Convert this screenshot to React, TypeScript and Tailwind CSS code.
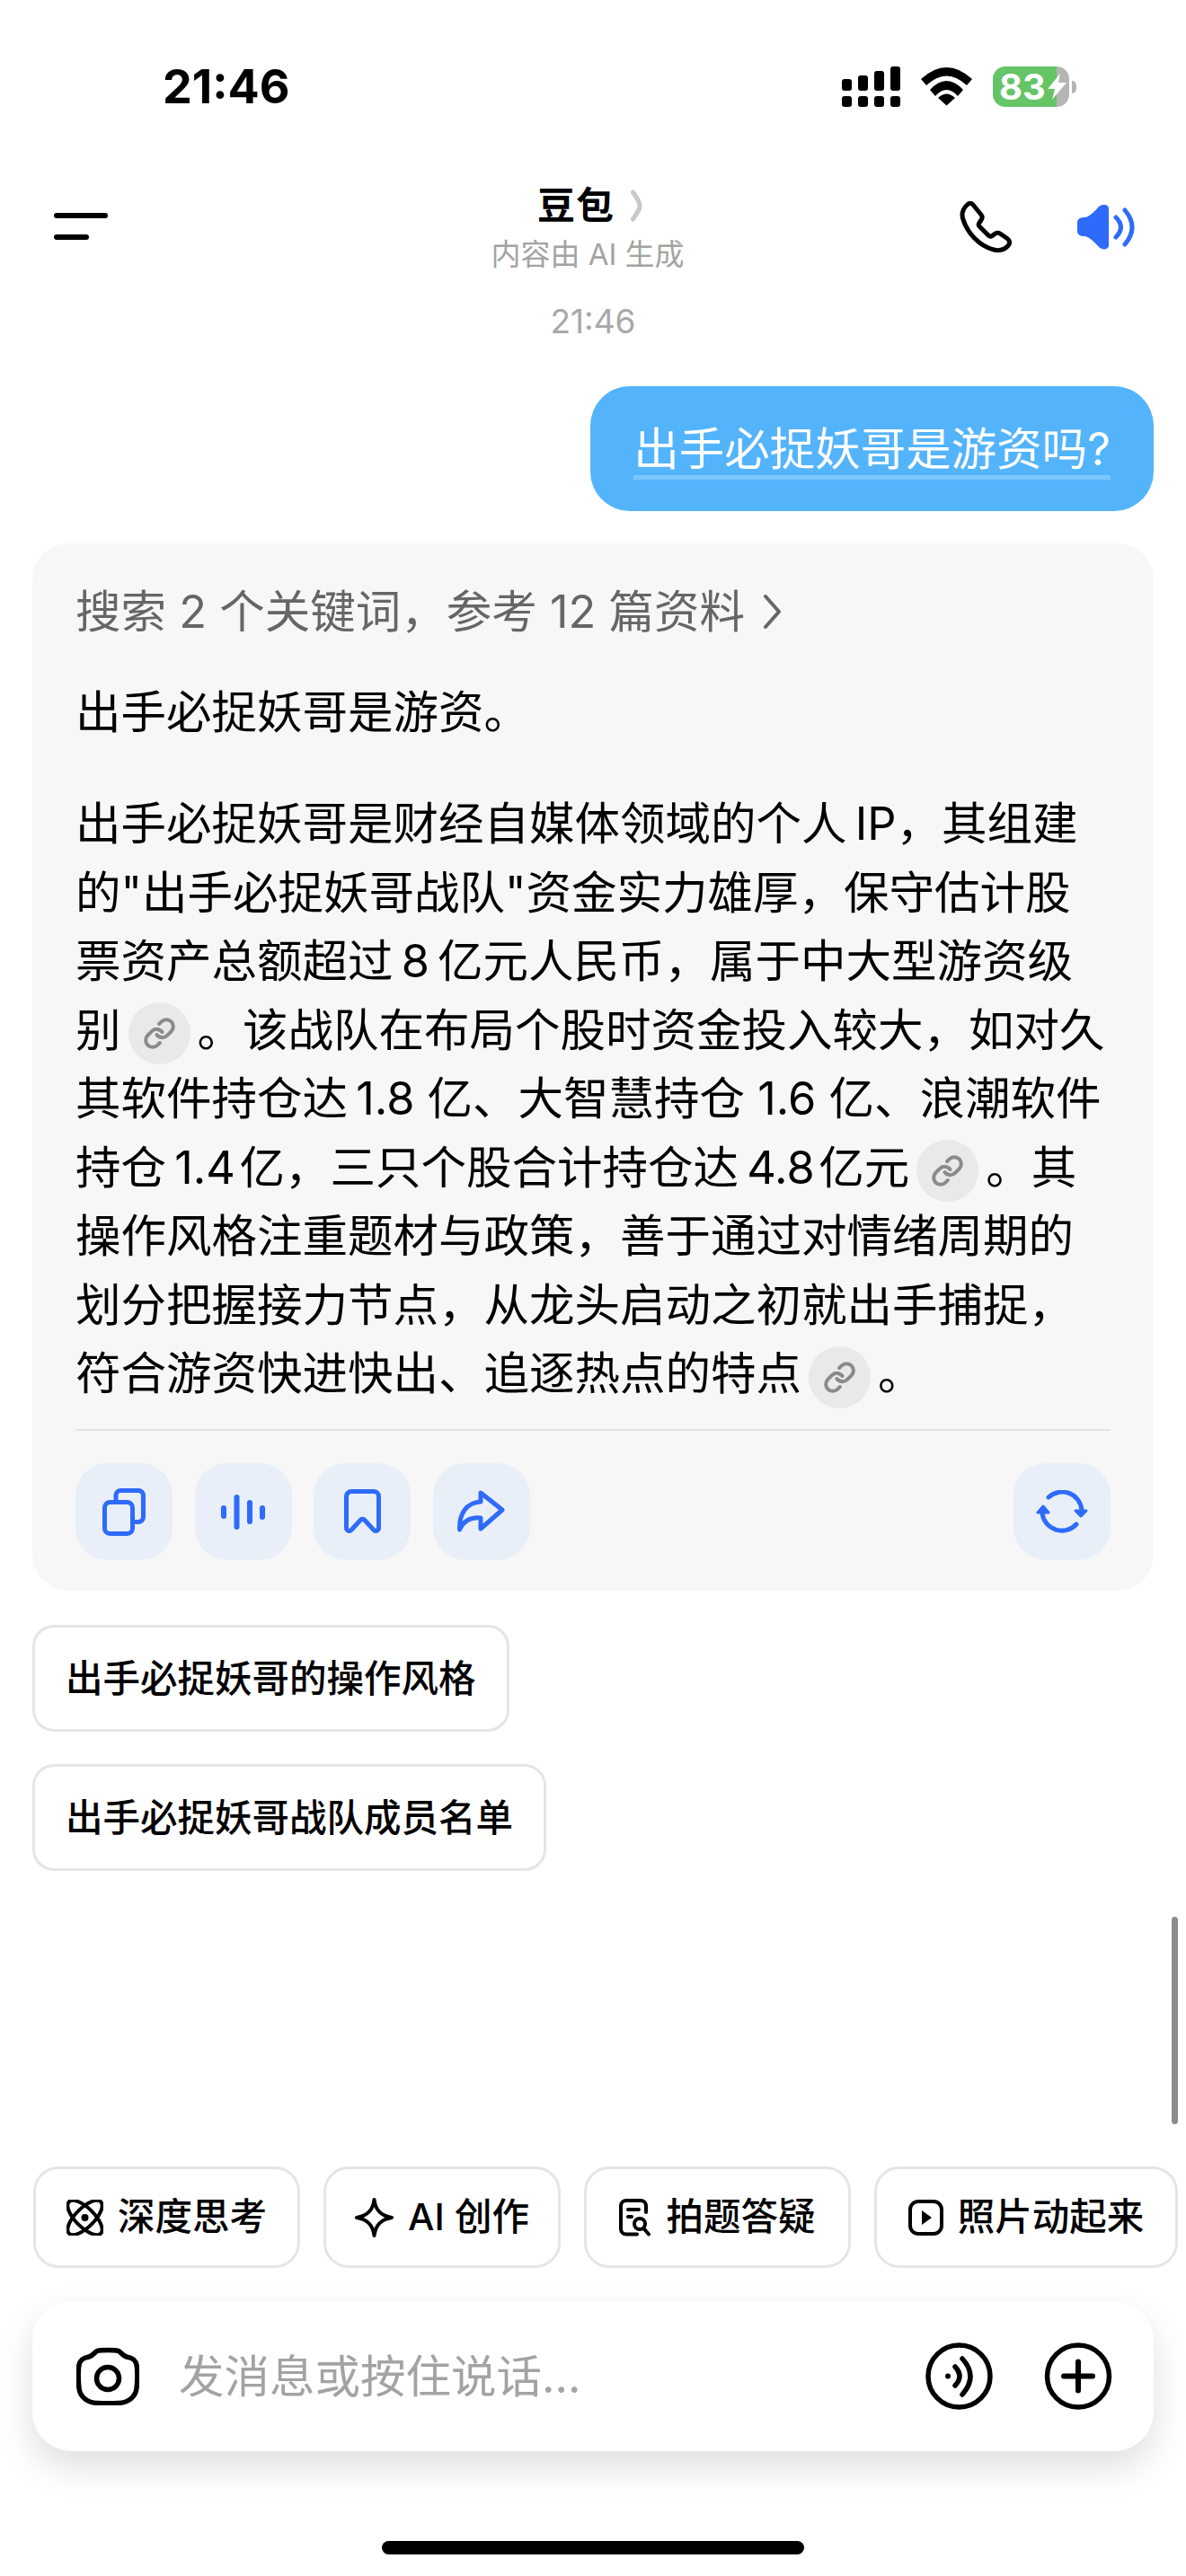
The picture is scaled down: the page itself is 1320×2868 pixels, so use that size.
import React from 'react';
import { Link } from 'lucide-react';

const BLUE = '#2e6bfa';

const LinkChip = () => (
  <span className="inline-flex w-[69px] h-[69px] mx-[8px] rounded-full bg-[#e9e9e9] items-center justify-center align-middle text-[#8a8a8a]">
    <Link size={37} strokeWidth={2.6} />
  </span>
);

const StatusBar = () => (
  <div className="flex items-center h-[45px] mt-[74px] pl-[181px]">
    <span className="w-[756px] text-[52px] leading-[45px] font-bold">21:46</span>
    <svg width="65" height="45" viewBox="0 0 65 45" fill="#000">
      <rect x="0" y="14" width="11" height="13" rx="3" />
      <rect x="18" y="10" width="11" height="17" rx="3" />
      <rect x="36" y="5" width="11" height="22" rx="3" />
      <rect x="54" y="0" width="11" height="27" rx="3" />
      <rect x="0" y="33" width="11" height="12" rx="3" />
      <rect x="18" y="33" width="11" height="12" rx="3" />
      <rect x="36" y="33" width="11" height="12" rx="3" />
      <rect x="54" y="33" width="11" height="12" rx="3" />
    </svg>
    <svg className="ml-[23px]" width="57" height="43" viewBox="0 0 57 43" fill="#000">
      <path d="M0 13 Q28.5 -13 57 13 L51 20 Q28.5 -1 6 20 Z" />
      <path d="M10 25 Q28.5 5 47 25 L41 32 Q28.5 18 16 32 Z" />
      <path d="M19 34 Q28.5 25 38 34 L28.5 42.5 Z" />
    </svg>
    <div className="relative ml-[23px] w-[85px] h-[45px] flex">
      <div className="w-[71px] rounded-l-[14px] bg-[#65c466]" />
      <div className="flex-1 rounded-r-[14px] bg-[#b5b5b5]" />
      <span className="absolute left-[7px] top-0 text-[40px] leading-[45px] font-bold text-white">83</span>
      <svg className="absolute left-[61px] top-[8px]" width="21" height="29" viewBox="0 0 21 29" fill="#fff">
        <path d="M14 0 L0 17 H8 L5 29 L21 10 H12 Z" />
      </svg>
    </div>
    <div className="ml-[3px] w-[5px] h-[14px] rounded-r-full bg-[#b5b5b5]" />
  </div>
);

const NavBar = () => (
  <div className="flex items-start mt-[85px] pl-[60px]">
    <div className="w-[488px] flex flex-col gap-[18px] pt-[33px]">
      <div className="w-[60px] h-[6px] rounded-full bg-black" />
      <div className="w-[39px] h-[6px] rounded-full bg-black" />
    </div>
    <div className="w-[212px] flex flex-col items-center">
      <div className="flex items-center h-[50px] gap-[17px] pl-[6px]">
        <span className="text-[42px] leading-[50px] font-bold tracking-[1px]">豆包</span>
        <svg width="15" height="36" viewBox="0 0 15 36" fill="none" stroke="#c9c9c9" strokeWidth="5" strokeLinecap="round" strokeLinejoin="round">
          <path d="M3.5 3 C9 11 11 14 11 18 C11 22 9 25 3.5 33" />
        </svg>
      </div>
      <span className="mt-[9px] text-[33px] leading-[40px] text-[#a3a3a3] whitespace-nowrap">内容由 AI 生成</span>
    </div>
    <div className="ml-[308px] mt-[20px] flex items-center gap-[71px]">
      <svg width="60" height="58" viewBox="0 0 60 58" fill="none" stroke="#000" strokeWidth="5" strokeLinejoin="round">
        <path d="M9 3.5 C11 1.5 13.5 2 15 4 L24 15 C25.5 17 25.5 19 24 21 L22 24 C21 25.5 21 27 22 28 L32 38 C33.5 39.5 35 39.5 36.5 38.5 L39 36.5 C41 35 43 35 45 36 L53 41.5 C56 43.5 56.5 47 54 49.5 C50 54 44 55.5 38 54 C22 50 8 35 3.5 19 C2 13 4.5 7.5 9 3.5 Z" />
      </svg>
      <svg width="64" height="52" viewBox="0 0 64 52" fill="none">
        <path fill={BLUE} d="M8 15 C12 15 17 11 24 3 C27 0 35 0 35 5 L35 46 C35 51 28 52 24 48 C18 41 12 36 8 36 C3 36 0 34 0 30 L0 21 C0 17 3 15 8 15Z" />
        <path stroke={BLUE} strokeWidth="5" strokeLinecap="round" d="M43 15 Q54 26 43 37" />
        <path stroke={BLUE} strokeWidth="5" strokeLinecap="round" d="M53 7 Q69 26 53 45" />
      </svg>
    </div>
  </div>
);

const IconButton = ({ children }: { children: React.ReactNode }) => (
  <button className="w-[108px] h-[108px] rounded-[36px] bg-[#e8eff8] flex items-center justify-center">
    {children}
  </button>
);

const AnswerCard = () => (
  <div className="mt-[36px] mx-[36px] w-[1248px] rounded-[40px] bg-[#f7f7f7] pt-[38px] pb-[34px] px-[48px]">
    <div className="flex items-center h-[76px] text-[50.5px] text-[#666666] whitespace-nowrap">
      <span>搜索 2 个关键词，参考 12 篇资料</span>
      <svg className="ml-[20px]" width="21" height="38" viewBox="0 0 21 38" fill="none" stroke="#666666" strokeWidth="4" strokeLinecap="round" strokeLinejoin="round">
        <path d="M3 2 L18 19 L3 36" />
      </svg>
    </div>
    <p className="mt-[36px] text-[50.5px] leading-[76px]">出手必捉妖哥是游资。</p>
    <div className="mt-[48px] text-[50.5px] leading-[76.5px] whitespace-nowrap">
      <div>出手必捉妖哥是财经自媒体领域的个人&thinsp;IP，其组建</div>
      <div>的"出手必捉妖哥战队"资金实力雄厚，保守估计股</div>
      <div>票资产总额超过&thinsp;8&thinsp;亿元人民币，属于中大型游资级</div>
      <div>别<LinkChip />。该战队在布局个股时资金投入较大，如对久</div>
      <div>其软件持仓达&thinsp;1.8 亿、大智慧持仓 1.6 亿、浪潮软件</div>
      <div>持仓&thinsp;1.4&#8202;亿，三只个股合计持仓达&thinsp;4.8&#8202;亿元<LinkChip />。其</div>
      <div>操作风格注重题材与政策，善于通过对情绪周期的</div>
      <div>划分把握接力节点，从龙头启动之初就出手捕捉，</div>
      <div>符合游资快进快出、追逐热点的特点<LinkChip />。</div>
    </div>
    <div className="mt-[23px] h-[2px] bg-[#e2e2e2]" />
    <div className="mt-[36px] flex gap-[24.5px]">
      <IconButton>
        <svg width="48" height="53" viewBox="0 0 48 53" fill="none" stroke={BLUE} strokeWidth="5">
          <rect x="2.5" y="15.5" width="31" height="35" rx="6" />
          <path d="M15 15 V8 a5.5 5.5 0 0 1 5.5 -5.5 H40 a5.5 5.5 0 0 1 5.5 5.5 V32 a5.5 5.5 0 0 1 -5.5 5.5 H34" />
        </svg>
      </IconButton>
      <IconButton>
        <svg width="49" height="39" viewBox="0 0 49 39" fill={BLUE}>
          <rect x="0" y="12" width="6" height="15" rx="3" />
          <rect x="14.5" y="0" width="6" height="39" rx="3" />
          <rect x="29" y="6" width="6" height="27" rx="3" />
          <rect x="43" y="12" width="6" height="16" rx="3" />
        </svg>
      </IconButton>
      <IconButton>
        <svg width="41" height="50" viewBox="0 0 41 50" fill="none" stroke={BLUE} strokeWidth="5" strokeLinejoin="round">
          <path d="M8 2.5 H33 a5.5 5.5 0 0 1 5.5 5.5 V43 c0 3 -3.5 4.5 -5.5 2.5 L22.5 34 c-1 -1 -3 -1 -4 0 L8 45.5 c-2 2 -5.5 .5 -5.5 -2.5 V8 a5.5 5.5 0 0 1 5.5 -5.5 Z" />
        </svg>
      </IconButton>
      <IconButton>
        <svg width="53" height="48" viewBox="0 0 53 48" fill="none" stroke={BLUE} strokeWidth="5" strokeLinejoin="round">
          <path d="M26 3 L50 22 L26 43 V31 C15 30 7 34 2.5 44 C2 26 10 14 26 13 Z" />
        </svg>
      </IconButton>
      <div className="ml-auto">
        <IconButton>
          <svg width="58" height="48" viewBox="0 0 58 48" fill="none" stroke={BLUE} strokeWidth="5" strokeLinecap="round" strokeLinejoin="round">
            <path d="M14 8 A22 22 0 0 1 51 22" />
            <path fill={BLUE} strokeWidth="3" d="M44 23 H56 L50 29 Z" />
            <path d="M45 38 A22 22 0 0 1 7 26" />
            <path fill={BLUE} strokeWidth="3" d="M2 25 H14 L8 18 Z" />
          </svg>
        </IconButton>
      </div>
    </div>
  </div>
);

const Suggestion = ({ text }: { text: string }) => (
  <button className="self-start h-[119px] px-[34px] rounded-[24px] border-[3px] border-[#e5e5e5] text-[41.5px] font-medium whitespace-nowrap">
    {text}
  </button>
);

const ActionChip = ({ width, icon, text }: { width: string; icon: React.ReactNode; text: string }) => (
  <button className={`${width} h-[113px] shrink-0 rounded-[28px] border-[3px] border-[#e5e5e5] flex items-center justify-center gap-[16px] text-[41.5px] font-medium whitespace-nowrap`}>
    {icon}
    <span>{text}</span>
  </button>
);

const Composer = () => (
  <div className="mt-[37px] mx-[36px] w-[1248px] h-[167px] rounded-[44px] bg-white shadow-[0_18px_40px_rgba(0,0,0,0.13)] flex items-center pl-[49px]">
    <svg width="70" height="65" viewBox="0 0 70 65" fill="none" stroke="#000" strokeWidth="5.5">
      <path d="M14 11 C19 9.5 20 6 23 4.5 C26 3 44 3 47 4.5 C50 6 51 9.5 56 11 C63 12 67 15 67.5 23 C68 30 68 38 67 46 C66 56 57 62 47 62.5 C39 63 31 63 23 62.5 C13 62 4 56 3 46 C2 38 2 30 2.5 23 C3 15 7 12 14 11 Z" />
      <circle cx="35" cy="35" r="12.5" />
    </svg>
    <span className="ml-[44px] w-[831px] text-[50.5px] text-[#a3a3a3] whitespace-nowrap">发消息或按住说话...</span>
    <svg width="75" height="75" viewBox="0 0 75 75" fill="none" stroke="#000" strokeWidth="5.5" strokeLinecap="round">
      <circle cx="37.5" cy="37.5" r="34.5" />
      <circle cx="25" cy="37.5" r="3" fill="#000" stroke="none" />
      <path d="M33 27 Q43 37.5 33 48" />
      <path d="M41 18 Q59 37.5 41 58" />
    </svg>
    <svg className="ml-[57px]" width="76" height="75" viewBox="0 0 76 75" fill="none" stroke="#000" strokeWidth="5.5" strokeLinecap="round">
      <circle cx="38" cy="37.5" r="34.5" />
      <path d="M22 37.5 H54 M38 21.5 V53.5" strokeWidth="6" />
    </svg>
  </div>
);

export default function App() {
  return (
    <div className="relative w-[1320px] h-[2868px] overflow-hidden bg-white text-black flex flex-col [font-family:Inter,'Noto_Sans_CJK_SC',sans-serif]">
      <StatusBar />
      <NavBar />

      <div className="mt-[33px] text-center text-[37px] leading-[44px] text-[#a8a8a8]">21:46</div>

      <div className="mt-[50px] mr-[36px] self-end rounded-[44px] bg-[#54b4fb] px-[48px] pt-[40px] pb-[35px] text-[50.5px] leading-[59px] text-white whitespace-nowrap">
        <div className="border-b-[5px] border-[#7cc7fb]">出手必捉妖哥是游资吗?</div>
      </div>

      <AnswerCard />

      <div className="mt-[38px] ml-[36px] flex flex-col gap-[36px]">
        <Suggestion text="出手必捉妖哥的操作风格" />
        <Suggestion text="出手必捉妖哥战队成员名单" />
      </div>

      <div className="mt-auto flex gap-[26px] pl-[37px]">
        <ActionChip
          width="w-[297px]"
          text="深度思考"
          icon={
            <svg width="41" height="40" viewBox="0 0 41 40" fill="none" stroke="#000" strokeWidth="4">
              <ellipse cx="20.5" cy="20" rx="25" ry="10.5" transform="rotate(45 20.5 20)" />
              <ellipse cx="20.5" cy="20" rx="25" ry="10.5" transform="rotate(-45 20.5 20)" />
              <circle cx="20.5" cy="20" r="4" fill="#000" stroke="none" />
            </svg>
          }
        />
        <ActionChip
          width="w-[264px]"
          text="AI 创作"
          icon={
            <svg width="43" height="44" viewBox="0 0 43 44" fill="none" stroke="#000" strokeWidth="4" strokeLinejoin="round">
              <path d="M21.5 2 C23 14 29 20 41 22 C29 24 23 30 21.5 42 C20 30 14 24 2 22 C14 20 20 14 21.5 2 Z" />
            </svg>
          }
        />
        <ActionChip
          width="w-[297px]"
          text="拍题答疑"
          icon={
            <svg width="36" height="42" viewBox="0 0 36 42" fill="none" stroke="#000" strokeWidth="4" strokeLinecap="round">
              <path d="M20 39.5 H8 a6 6 0 0 1 -6 -6 V8 a6 6 0 0 1 6 -6 H24 a6 6 0 0 1 6 6 V15" />
              <path d="M10 12 H22 M10 20 H14" />
              <circle cx="23" cy="28" r="6" />
              <path d="M27.5 33 L33 39.5" />
            </svg>
          }
        />
        <ActionChip
          width="w-[338px]"
          text="照片动起来"
          icon={
            <svg width="39" height="40" viewBox="0 0 39 40" fill="none" stroke="#000" strokeWidth="4">
              <rect x="2" y="2" width="35" height="36" rx="9" />
              <path d="M15 12 L26 20 L15 28 Z" fill="#000" stroke="none" />
            </svg>
          }
        />
      </div>

      <Composer />

      <div className="mt-[100px] mb-[24px] mx-auto w-[470px] h-[15px] rounded-full bg-black" />

      {/* scroll indicator sits over the content */}
      <div className="absolute left-[1304px] top-[2134px] w-[7px] h-[231px] rounded-full bg-[#8c8c8c]" />
    </div>
  );
}
